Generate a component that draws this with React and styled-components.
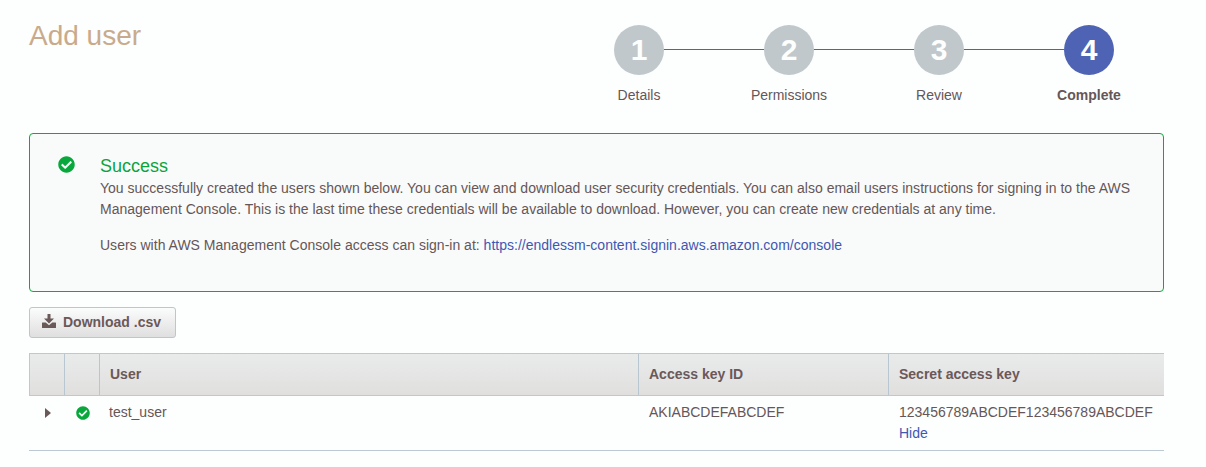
import React from "react";
import styled, { createGlobalStyle, css } from "styled-components";
import { FaCheckCircle } from "react-icons/fa";

const Global = createGlobalStyle`
  * { box-sizing: border-box; }
  body {
    margin: 0;
    background: #fdfefe;
    color: #655658;
    font: 14px/21px "Liberation Sans", Arial, sans-serif;
  }
`;

const Page = styled.main`
  width: 1206px;
  height: 467px;
  padding: 20px 42px 0 29px;
  overflow: hidden;
`;

const Header = styled.header`
  display: flex;
  justify-content: space-between;
  height: 113px;
`;

const Title = styled.h1`
  margin: 0;
  font-size: 28px;
  line-height: 32px;
  font-weight: 400;
  color: #c9ab8c;
`;

const Steps = styled.ol`
  display: flex;
  list-style: none;
  margin: 5px 0 0;
  padding: 0;
`;

const Step = styled.li`
  width: 150px;
  display: flex;
  flex-direction: column;
  align-items: center;
  font-weight: ${(p) => (p.$active ? 700 : 400)};
`;

const Track = styled.div`
  width: 100%;
  display: flex;
  align-items: center;
  height: 50px;
`;

const Line = styled.span`
  flex: 1;
  height: 1px;
  margin-top: -1px;
  background: ${(p) => (p.$hidden ? "transparent" : "#6a6558")};
`;

const Circle = styled.span`
  width: 50px;
  height: 50px;
  border-radius: 50%;
  background: ${(p) => (p.$active ? "#4f63b5" : "#c0c8cc")};
  color: #fdfefe;
  font-size: 30px;
  line-height: 49px;
  font-weight: 700;
  text-align: center;
`;

const StepLabel = styled.span`
  margin-top: 10px;
`;

const Alert = styled.section`
  display: flex;
  height: 159px;
  padding: 21px 28px 0 28px;
  border: 1px solid #12a642;
  border-radius: 4px;
  background: #f9fbfa;
`;

const AlertIcon = styled.div`
  flex: none;
  width: 42px;
  padding-top: 1px;
`;

const Check = styled(FaCheckCircle)`
  display: block;
  color: #09a83c;
`;

const AlertTitle = styled.h2`
  margin: 0;
  font-size: 18px;
  line-height: 22px;
  padding-bottom: 1px;
  font-weight: 400;
  color: #0ca33c;
`;

const Paragraph = styled.p`
  margin: 0 0 15px;
  letter-spacing: 0.009px;
`;

const Link = styled.a`
  color: #4157b2;
  text-decoration: none;
`;

const Download = styled.button`
  display: flex;
  align-items: center;
  width: 147px;
  height: 31px;
  margin: 15px 0;
  padding: 0 0 1px 12px;
  gap: 7px;
  border: 1px solid #bcc6cc;
  border-radius: 3px;
  background: linear-gradient(#fbfcfc, #e0dfdf);
  color: #6b5859;
  font: 700 14px/20px "Liberation Sans", Arial, sans-serif;
  white-space: nowrap;
  svg { margin-top: -3px; }
`;

const rowGrid = css`
  display: grid;
  grid-template-columns: 35px 35px 539px 250px 1fr;
`;

const HeadRow = styled.div`
  ${rowGrid}
  height: 43px;
  border: 1px solid #bcc9d2;
  border-right: 0;
  background: linear-gradient(#e9ebeb, #e0dfde);
  color: #6b5859;
  font-weight: 700;
`;

const HeadCell = styled.div`
  padding: 10px;
  border-right: 1px solid #b7c6d0;
  &:last-child { border-right: 0; }
`;

const Row = styled.div`
  ${rowGrid}
  height: 55px;
  padding-left: 1px;
  border-bottom: 1px solid #bcc9d2;
`;

const Cell = styled.div`
  padding: 6px 0 0 ${(p) => p.$left ?? 10}px;
`;

const IconCell = styled.div`
  padding: ${(p) => p.$top}px 0 0 ${(p) => p.$left}px;
  svg { display: block; }
`;

const steps = ["Details", "Permissions", "Review", "Complete"];

const DownloadIcon = () => (
  <svg width="14" height="14" viewBox="0 0 14 14" fill="currentColor">
    <path d="M5.5 0h3v4.5H12L7 9.5 2 4.5h3.5z" />
    <path d="M.5 8.5h3.2L7 11.300l3.300-2.800h3.200q.5 0 .5.5v4.500q0 .5-.5.5H.5q-.5 0-.5-.5V9q0-.5.5-.5z" />
  </svg>
);

export default function App() {
  return (
    <>
      <Global />
      <Page>
        <Header>
          <Title>Add user</Title>
          <Steps>
            {steps.map((label, i) => {
              const active = i === steps.length - 1;
              return (
                <Step key={label} $active={active}>
                  <Track>
                    <Line $hidden={i === 0} />
                    <Circle $active={active}>{i + 1}</Circle>
                    <Line $hidden={active} />
                  </Track>
                  <StepLabel>{label}</StepLabel>
                </Step>
              );
            })}
          </Steps>
        </Header>
        <Alert>
          <AlertIcon><Check size={17} /></AlertIcon>
          <div>
            <AlertTitle>Success</AlertTitle>
            <Paragraph>
              You successfully created the users shown below. You can view and download user security credentials. You can also email users instructions for signing in to the AWS Management Console. This is the last time these credentials will be available to download. However, you can create new credentials at any time.
            </Paragraph>
            <Paragraph>
              Users with AWS Management Console access can sign-in at: <Link>https://endlessm-content.signin.aws.amazon.com/console</Link>
            </Paragraph>
          </div>
        </Alert>
        <Download><DownloadIcon />Download .csv</Download>
        <HeadRow>
          <HeadCell />
          <HeadCell />
          <HeadCell>User</HeadCell>
          <HeadCell>Access key ID</HeadCell>
          <HeadCell>Secret access key</HeadCell>
        </HeadRow>
        <Row>
          <IconCell $top={12} $left={15}>
            <svg width="6" height="10" viewBox="0 0 6 10" fill="#6b5859"><path d="M0 0l6 5-6 5z" /></svg>
          </IconCell>
          <IconCell $top={10} $left={11}><Check size={14} /></IconCell>
          <Cell $left={9}>test_user</Cell>
          <Cell>AKIABCDEFABCDEF</Cell>
          <Cell>123456789ABCDEF123456789ABCDEF<br /><Link>Hide</Link></Cell>
        </Row>
      </Page>
    </>
  );
}
